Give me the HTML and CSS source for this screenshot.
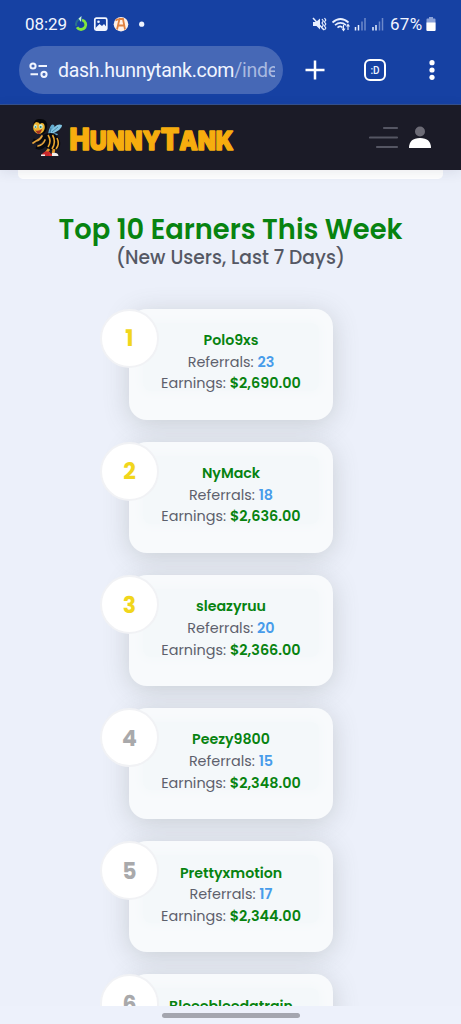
FILE: index.html
```html
<!DOCTYPE html>
<html lang="en">
<head>
<meta charset="utf-8">
<meta name="viewport" content="width=device-width, initial-scale=1">
<title>HunnyTank</title>
<link rel="stylesheet" href="styles.css">
</head>
<body>
<div class="screen">
  <div class="browser">
    <div class="status">
      <span class="clock">08:29</span>
      <svg class="notices" width="74" height="20" viewBox="0 0 74 20">
        <path d="M6 5A5.500 5.500 0 0 0 2.300 12" fill="none" stroke="#286f91" stroke-width="2"/>
        <path d="M3 13.300A4.800 4.800 0 1 0 8 6" fill="none" stroke="#82e63c" stroke-width="2.800"/>
        <path d="M4.500 4.500L7.500 2l-.5 6z" fill="#c8f3dd"/>
        <rect x="20.800" y="4.200" width="12" height="12" rx="1.600" fill="none" stroke="#f2f6ff" stroke-width="1.700"/>
        <path d="M21.500 14l4-4 2.500 2 2-2 2.500 3v3h-11z" fill="#f2f6ff"/>
        <circle cx="24.500" cy="7.800" r="1.300" fill="#f2f6ff"/>
        <circle cx="47" cy="10.200" r="7.300" fill="#fff0e6"/>
        <path d="M43 15.500L45.500 5h3.500l2 10.500M44 11.500h6.500M41.500 6.500l3-1.500" fill="none" stroke="#e0813f" stroke-width="1.800"/>
        <circle cx="67.700" cy="10.200" r="2.600" fill="#eef4ff"/>
      </svg>
      <svg class="signals" width="74" height="20" viewBox="0 0 74 20">
        <path d="M1 8h3l4-3.500v11L4.500 12H1z" fill="#e8efff"/>
        <path d="M1 4l11 12" stroke="#e8efff" stroke-width="1.500"/>
        <path d="M10 5l1.300 2L10 9l1.300 2L10 13M12.500 4l1.300 2-1.300 2 1.300 2-1.300 2 1.300 2-1.300 2" fill="none" stroke="#e8efff" stroke-width="1.200"/>
        <path d="M20.500 8.500q8-7 16 0M23 11.200q5.500-4.500 11 0M25.500 13.600q3-2.400 5 0" fill="none" stroke="#e8efff" stroke-width="1.700"/>
        <path d="M31.500 11v5M30 14.500l1.500 2 1.500-2M36 16v-5M34.500 12.500l1.500-2 1.500 2" fill="none" stroke="#e8efff" stroke-width="1.100"/>
        <path d="M43.500 13v3.500M46.500 11v5.500" stroke="#e8efff" stroke-width="1.500"/>
        <path d="M50 7.500v9M53 4v12.500" stroke="#6d89ca" stroke-width="1.500"/>
        <path d="M61 13v3.500M64 11v5.500" stroke="#e8efff" stroke-width="1.500"/>
        <path d="M67.500 7.500v9M70.500 4v12.500" stroke="#6d89ca" stroke-width="1.500"/>
      </svg>
      <span class="percent">67%</span>
      <svg class="battery" width="10" height="16" viewBox="0 0 10 16">
        <path d="M3 1h4v1.500h1.500q1 0 1 1V14q0 1-1 1h-7q-1 0-1-1V3.500q0-1 1-1H3z" fill="#8ba2d8"/>
        <path d="M.5 6.500h9V14q0 1-1 1h-7q-1 0-1-1z" fill="#fff"/>
      </svg>
    </div>
    <div class="toolbar">
      <div class="address">
        <svg width="20" height="18" viewBox="0 0 20 18" fill="none" stroke="#f1f5ff" stroke-width="2">
          <circle cx="4" cy="5" r="2.600"/><path d="M9.500 5H18M1.500 13.300H9"/><circle cx="15" cy="13.300" r="2.600"/>
        </svg>
        <span class="url">dash.hunnytank.com<span class="path">/inde</span></span>
      </div>
      <svg class="plus" width="20" height="20" viewBox="0 0 20 20"><path d="M10 .5v19M.5 10h19" stroke="#fff" stroke-width="2.500"/></svg>
      <span class="tabs">:D</span>
      <svg class="dots" width="6" height="20" viewBox="0 0 6 20" fill="#fff"><circle cx="3" cy="2.700" r="2.600"/><circle cx="3" cy="10" r="2.600"/><circle cx="3" cy="17.300" r="2.600"/></svg>
    </div>
  </div>

  <header class="site-header">
    <svg class="bee" width="32" height="42" viewBox="0 0 32 42">
      <path d="M17 17Q19 7 22 7.500q4 1-2 9.500z" fill="#64acd0"/>
      <path d="M18 17Q25 5 31 8q1 4-12 10z" fill="#82c5e2"/>
      <path d="M18 18q5-3 9-1-1 3-9 2z" fill="#5da5c9"/>
      <path d="M20 11l-1 5M27 10l-6 5" stroke="#356f92" stroke-width=".7"/>
      <path d="M12 18Q22 13 27 20q4 6 1 11-5 4-11 1-6-4-5-14z" fill="#08090e"/>
      <path d="M17 18q4 6 0 12M21.500 18q4 7-.5 14M26 21q3 6-1 11" fill="none" stroke="#e9a62f" stroke-width="1.600"/>
      <path d="M12 20q-2 5-6 5l-4-2M15 23q-1 7-7 8l-3-1" fill="none" stroke="#08090e" stroke-width="3.600"/>
      <path d="M11 19q-2 4-6 5l-3 2M14 23q-2 5-7 6" fill="none" stroke="#e4a33d" stroke-width="1.700" stroke-linecap="round"/>
      <path d="M2 9Q3 1 9 2q8 0 7 8-1 8-7 7z" fill="#050609"/>
      <path d="M2 10q0-3 3-5 3 0 4 2 2-2 4 0 2 4-1 8-4 4-8 0-2-2-2-5z" fill="#eeb32e"/>
      <ellipse cx="4.500" cy="9.500" rx="1.400" ry="2" fill="#c8f0e2"/><ellipse cx="9.800" cy="9.500" rx="1.900" ry="2.300" fill="#c8f0e2"/>
      <circle cx="4.500" cy="10" r=".8" fill="#247b72"/><circle cx="9.600" cy="10" r="1" fill="#247b72"/>
      <path d="M4 13.500q4 1 7-1.500-1 5-4 5z" fill="#a43221"/>
      <path d="M18 32l-3 4M23 32l-1 5" stroke="#e0972a" stroke-width="2.800"/>
      <path d="M11 37q3-4 8-2l1 4h-9z" fill="#c9292b"/><path d="M10 37.500h4V39h-4zM21 36q6-1 6.500 3H21z" fill="#f2efed"/><path d="M18 36l3 1v2h-3z" fill="#d9302d"/>
    </svg>
    <svg class="wordmark" width="168" height="34" viewBox="0 0 168 34" role="img" aria-label="HunnyTank">
      <text class="word" x="1.500" y="25.500" font-size="30" textLength="164" lengthAdjust="spacingAndGlyphs">H<tspan font-size="26">UNNY</tspan>T<tspan font-size="26">ANK</tspan></text>
    </svg>
    <svg class="menu" width="30" height="24" viewBox="0 0 30 24" stroke="#555663" stroke-width="2.200" stroke-linecap="round"><path d="M15 2h13M1 11.500h27M8 21h20"/></svg>
    <svg class="user" width="24" height="24" viewBox="0 0 24 24"><circle cx="12" cy="6.500" r="5" fill="#6c6b75"/><path d="M1 23q0-10 11-10t11 10z" fill="#fff"/></svg>
  </header>

  <main class="content">
    <div class="panel-end"></div>
    <h1>Top 10 Earners This Week</h1>
    <p class="subtitle">(New Users, Last 7 Days)</p>
    <ol class="earners">
      <li><span class="rank gold">1</span><b class="name">Polo9xs</b><span>Referrals: <b class="count">23</b></span><span>Earnings: <b class="money">$2,690.00</b></span></li>
      <li><span class="rank gold">2</span><b class="name">NyMack</b><span>Referrals: <b class="count">18</b></span><span>Earnings: <b class="money">$2,636.00</b></span></li>
      <li><span class="rank gold">3</span><b class="name">sleazyruu</b><span>Referrals: <b class="count">20</b></span><span>Earnings: <b class="money">$2,366.00</b></span></li>
      <li><span class="rank">4</span><b class="name">Peezy9800</b><span>Referrals: <b class="count">15</b></span><span>Earnings: <b class="money">$2,348.00</b></span></li>
      <li><span class="rank">5</span><b class="name">Prettyxmotion</b><span>Referrals: <b class="count">17</b></span><span>Earnings: <b class="money">$2,344.00</b></span></li>
      <li><span class="rank">6</span><b class="name">Bleeebleedatrain</b></li>
    </ol>
  </main>
  <div class="gesture"><i></i></div>
</div>
</body>
</html>
```

FILE: styles.css
```css
* { box-sizing: border-box; }
body { margin: 0; background: #ecf0fa; font-family: Poppins, Inter, sans-serif; }
.screen { width: 461px; height: 1024px; display: flex; flex-direction: column; overflow: hidden; }

.browser { height: 105px; flex: none; background: #1641a3; border-bottom: 1px solid #34518f; color: #f1f5ff; font-family: Roboto, sans-serif; }
.status { display: flex; align-items: center; height: 46px; padding: 2px 25px 0 25px; }
.clock { width: 43px; font-size: 17px; letter-spacing: -.1px; }
.notices { margin-left: 6px; }
.signals { margin-left: auto; }
.percent { width: 36px; margin-left: 4px; font-size: 17px; letter-spacing: .3px; }
.toolbar { display: flex; align-items: center; height: 48px; padding-left: 19px; }
.address { display: flex; align-items: center; width: 264px; height: 48px; padding-left: 10px; border-radius: 24px; background: #4668b6; }
.url { width: 217px; margin-left: 9px; overflow: hidden; white-space: nowrap; font-size: 19.500px; letter-spacing: -.27px; }
.path { color: #a9b9e0; }
.plus { margin-left: 22px; }
.tabs { display: flex; align-items: center; justify-content: center; width: 22px; height: 22px; margin-left: 39px; border: 2.300px solid #fff; border-radius: 6px; font-size: 10px; font-weight: 500; }
.dots { margin-left: 43px; }

.site-header { display: flex; height: 65px; flex: none; padding-left: 31px; background: #1b1b27; position: relative; z-index: 1; box-shadow: 0 2px 12px rgba(40, 50, 80, .1); }
.bee { margin-top: 12px; }
.wordmark { margin: 19px 0 0 5px; }
.word { font-family: Inter, sans-serif; font-weight: 900; fill: #f7ad0e; stroke: #f7ad0e; stroke-width: 1.400px; stroke-linejoin: round; }
.menu { margin: 21px 0 0 133px; }
.user { margin: 20px 0 0 9px; }

.content { height: 836px; flex: none; overflow: hidden; }
.panel-end { height: 9px; margin: 0 18px; border-radius: 0 0 5px 5px; background: #fff; }
h1 { margin: 34px 0 0; height: 32px; line-height: 33px; text-align: center; white-space: nowrap; color: #078310; font-size: 27.300px; font-weight: 600; }
.subtitle { margin: 0; height: 24px; line-height: 25px; text-align: center; color: #555864; font-size: 18.700px; font-weight: 500; }
.earners { display: grid; gap: 22px; margin: 39.500px 0 0 129px; padding: 0; list-style: none; }
.earners li { position: relative; display: flex; flex-direction: column; align-items: center; width: 204px; height: 111.200px; padding-top: 21.300px; border-radius: 18px; background: #f8fafc; box-shadow: 0 4px 26px rgba(90, 100, 95, .24); color: #5d606c; font-size: 14.400px; line-height: 21.700px; white-space: nowrap; }
.earners li::before { content: ""; position: absolute; inset: 14px 14px 29px; border-radius: 8px; background: #f4f8fa; box-shadow: 0 0 8px 2px #f4f8fa; }
.earners li > span, .earners li > b { z-index: 1; }
.earners b { font-weight: 600; }
.earners .name, .earners .money { color: #078310; }
.earners .name { font-size: 14.200px; }
.earners .count { color: #479cea; }
.earners .rank { position: absolute; left: -29px; top: 0; display: flex; align-items: center; justify-content: center; width: 59px; height: 59px; padding-top: 2px; border: 2px solid #f1f2f5; border-radius: 50%; background: #fff; color: #a9a9ab; font-size: 22px; font-weight: 700; }
.earners .gold { color: #f1d61c; }

.gesture { display: flex; justify-content: center; height: 18px; flex: none; padding-top: 7px; background: #edf1fb; }
.gesture i { width: 138px; height: 4.500px; border-radius: 3px; background: #a4a6af; }
```
